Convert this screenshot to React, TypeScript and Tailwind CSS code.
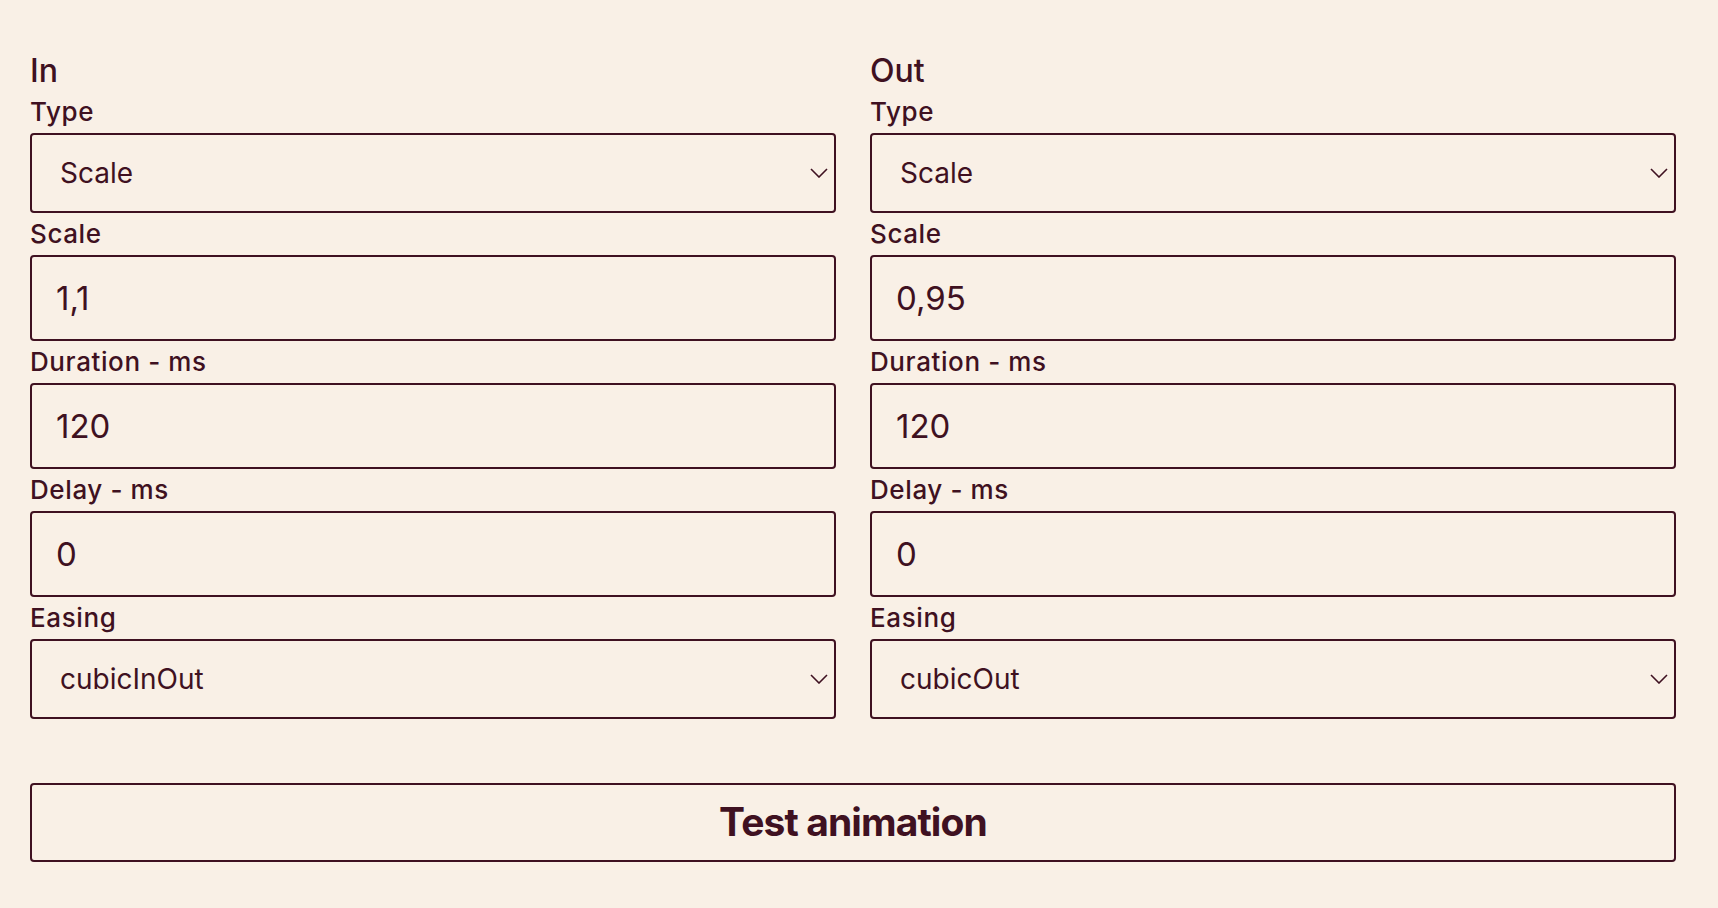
import React from "react";

const ink = "text-[#3f1121]";

const Chevron: React.FC = () => (
  <svg
    className="pointer-events-none absolute right-[8px] top-1/2 -translate-y-1/2"
    width="18"
    height="10"
    viewBox="0 0 18 10"
    fill="none"
    stroke="#3f1121"
    strokeWidth="1.6"
  >
    <polyline points="1,1 9,9 17,1" />
  </svg>
);

const Label: React.FC<{ text: string }> = ({ text }) => (
  <label className={`block text-[26px] leading-[42px] font-[550] tracking-[0.6px] ${ink}`}>{text}</label>
);

const Select: React.FC<{ value: string; options: string[] }> = ({ value, options }) => (
  <div className="relative">
    <select
      defaultValue={value}
      className={`block w-full h-[80px] appearance-none bg-transparent border-2 border-[#3f1121] rounded-[4px] pl-[28px] pr-10 text-[28px] ${ink} outline-none`}
    >
      {options.map((o) => (
        <option key={o}>{o}</option>
      ))}
    </select>
    <Chevron />
  </div>
);

const Input: React.FC<{ value: string }> = ({ value }) => (
  <input
    type="text"
    defaultValue={value}
    className={`block w-full h-[86px] bg-transparent border-2 border-[#3f1121] rounded-[4px] px-[24px] text-[33px] ${ink} outline-none`}
  />
);

const easings = ["linear", "cubicIn", "cubicOut", "cubicInOut", "quadIn", "quadOut", "quadInOut"];

const Column: React.FC<{ title: string; scale: string; easing: string }> = ({ title, scale, easing }) => (
  <div className="flex flex-col">
    <h2 className={`text-[32px] leading-[40px] font-medium ${ink}`}>{title}</h2>
    <Label text="Type" />
    <Select value="Scale" options={["Fade", "Scale", "Slide", "Blur"]} />
    <Label text="Scale" />
    <Input value={scale} />
    <Label text="Duration - ms" />
    <Input value="120" />
    <Label text="Delay - ms" />
    <Input value="0" />
    <Label text="Easing" />
    <Select value={easing} options={easings} />
  </div>
);

export default function App() {
  return (
    <div className="min-h-screen w-full bg-[#f9f0e6] font-['Inter',sans-serif]">
      <div className="pl-[30px] pr-[42px] pt-[51px] pb-[46px]">
        <div className="grid grid-cols-2 gap-x-[34px]">
          <Column title="In" scale="1,1" easing="cubicInOut" />
          <Column title="Out" scale="0,95" easing="cubicOut" />
        </div>
        <button
          className={`mt-[64px] w-full h-[79px] border-2 border-[#3f1121] rounded-[4px] bg-transparent text-[39px] font-bold tracking-[-0.9px] ${ink}`}
        >
          Test animation
        </button>
      </div>
    </div>
  );
}
